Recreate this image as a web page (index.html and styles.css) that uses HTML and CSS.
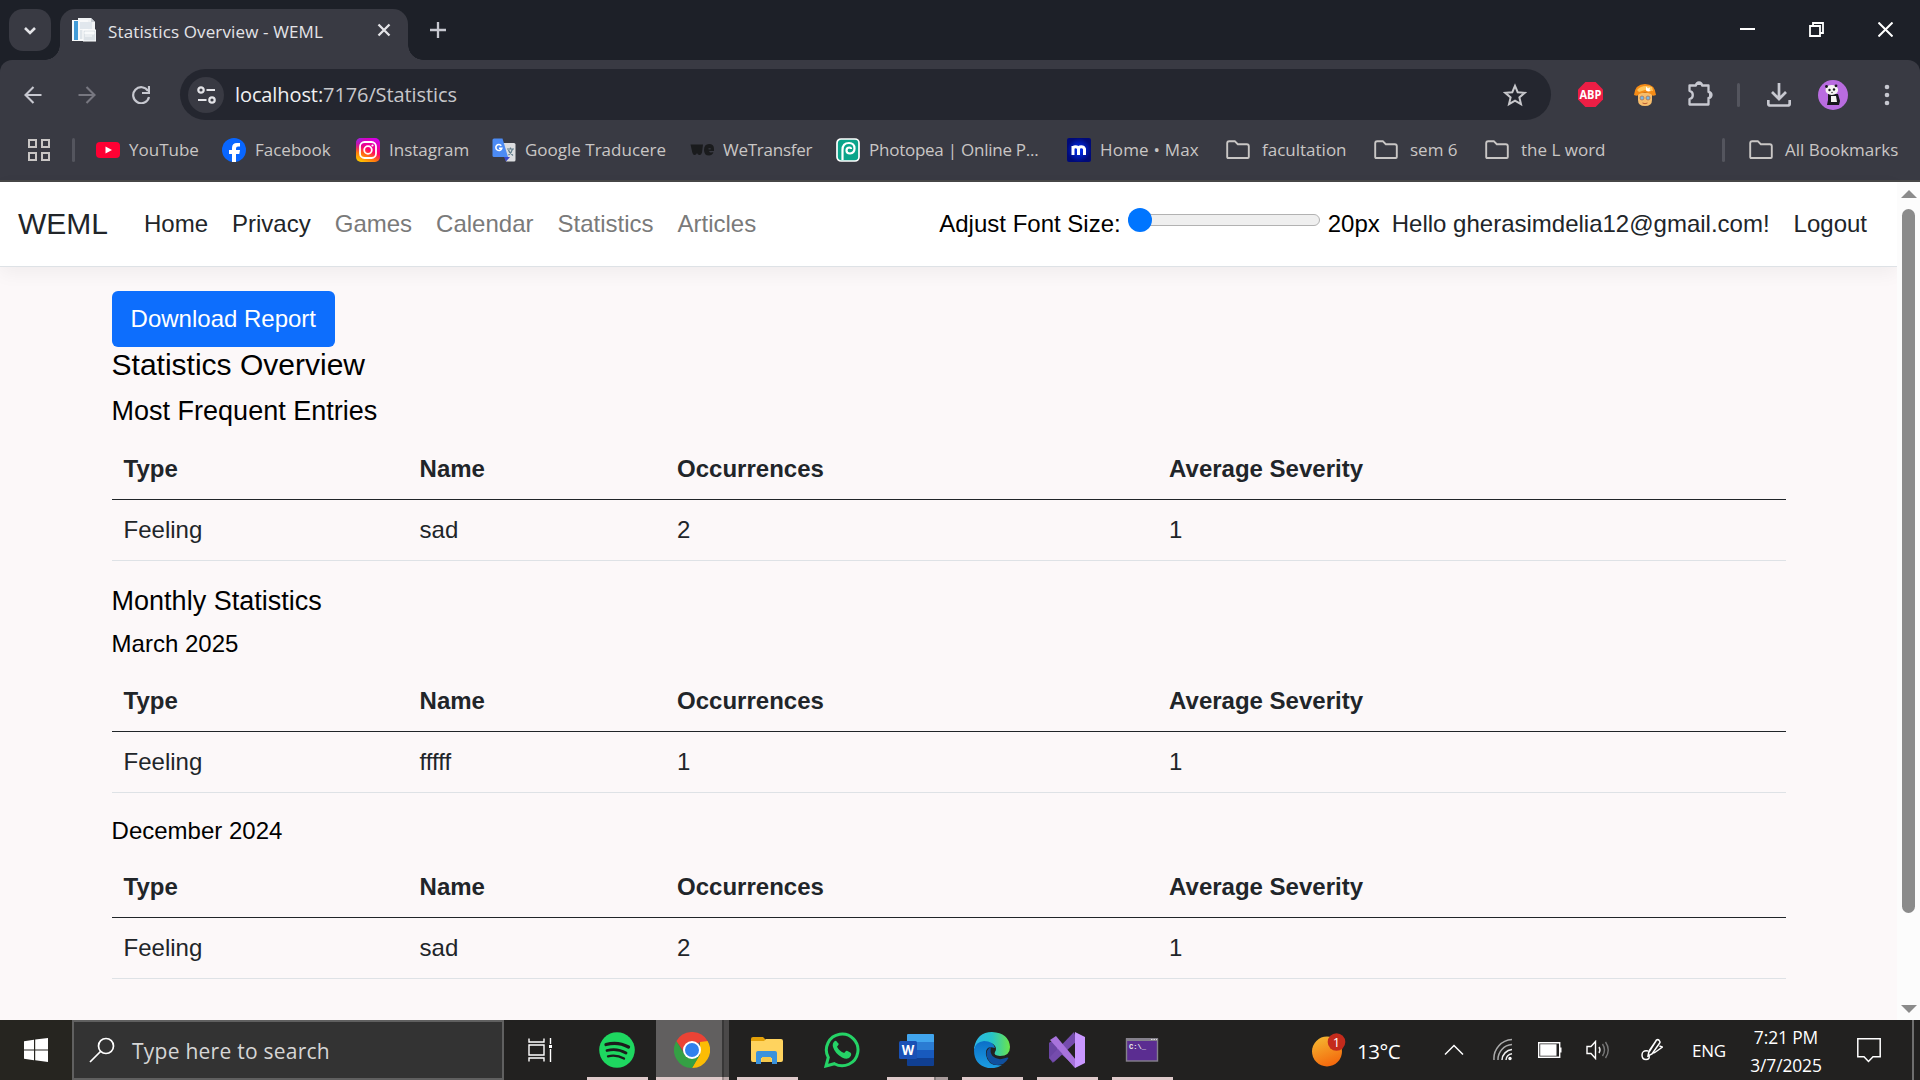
FILE: index.html
```html
<!DOCTYPE html>
<html lang="en">
<head>
<meta charset="utf-8">
<title>Statistics Overview - WEML</title>
<link rel="stylesheet" href="styles.css">
</head>
<body>
<svg class="defs" width="0" height="0" aria-hidden="true">
  <symbol id="folder" viewBox="0 0 24 24"><path d="M1.2 19V5.2q0-2 2-2h5.6l3 3h9q2 0 2 2V19q0 1-1 1H2.2q-1 0-1-1z" fill="none" stroke="#c9c6c5" stroke-width="1.9"/></symbol>
</svg>
<div class="screen">
  <header class="tabstrip">
    <button class="tab-search"><svg width="14" height="9" viewBox="0 0 14 9"><path d="M2 2l5 5 5-5" fill="none" stroke="#e4e4e8" stroke-width="2.6"/></svg></button>
    <div class="tab">
      <svg class="favicon" width="24" height="24" viewBox="0 0 24 24"><path d="M6 0h13l4 4v18H6z" fill="#f1f3f5"/><path d="M19 0v4h4z" fill="#c9ced4"/><path d="M0 2h16v21H0z" fill="#f8f9fa"/><path d="M2 3h4v19H2z" fill="#429bd7"/><path d="M8 4h12v7H8z" fill="#e1e7ed"/><path d="M8 12h4v9H8z" fill="#dfe5ea"/><path d="M11 12h13v11H11z" fill="#dce2e7" stroke="#fff"/><path d="M13 14h9v2h-9zM13 18h7" stroke="#f8fafb" fill="#f8fafb"/></svg>
      <span class="tab-title">Statistics Overview - WEML</span>
      <svg class="tab-close" width="14" height="14" viewBox="0 0 14 14"><path d="M1.5 1.5l11 11m0-11l-11 11" stroke="#e4e4e8" stroke-width="2.3"/></svg>
    </div>
    <svg class="tab-new" width="16" height="16" viewBox="0 0 16 16"><path d="M8 0v16M0 8h16" stroke="#c7c8d0" stroke-width="2.3"/></svg>
    <div class="window-controls">
      <svg width="15" height="15" viewBox="0 0 15 15"><path d="M0 7h15" stroke="#fff" stroke-width="2"/></svg>
      <svg width="15" height="15" viewBox="0 0 15 15" fill="none" stroke="#fff" stroke-width="1.8"><path d="M1 4h10v10H1zM4 3.5V1h10v10h-2.5"/></svg>
      <svg width="15" height="15" viewBox="0 0 15 15"><path d="M.5.5l14 14m0-14l-14 14" stroke="#fff" stroke-width="2"/></svg>
    </div>
  </header>

  <div class="chrome">
    <div class="toolbar">
      <div class="nav-buttons">
        <svg width="18" height="18" viewBox="0 0 18 18"><path d="M17.5 9H1.5M9.5 1L1.5 9l8 8" fill="none" stroke="#c7c8d0" stroke-width="2.1"/></svg>
        <svg width="18" height="18" viewBox="0 0 18 18"><path d="M.5 9h16M8.500 1l8 8-8 8" fill="none" stroke="#777780" stroke-width="2.1"/></svg>
        <svg width="18" height="18" viewBox="0 0 18 18"><path d="M16 5A8 8 0 1 0 17 11" fill="none" stroke="#c7c8d0" stroke-width="2.2"/><path d="M17 0v7h-7" fill="none" stroke="#c7c8d0" stroke-width="2.2"/></svg>
      </div>
      <div class="omnibox">
        <span class="site-chip"><svg width="19" height="18" viewBox="0 0 19 18" fill="none" stroke="#e4e4e8" stroke-width="2.2"><circle cx="4" cy="4" r="2.7"/><path d="M9.500 4H18M1 14h8.500"/><circle cx="15" cy="14" r="2.700"/></svg></span>
        <span class="url"><b>localhost:</b>7176/Statistics</span>
        <svg class="star" width="24" height="24" viewBox="0 0 24 24"><path d="M12 2.800l2.700 6.400 7 .6-5.300 4.600 1.600 6.800-6-3.600-6 3.600 1.600-6.800-5.300-4.600 7-.6z" fill="none" stroke="#c7c7cb" stroke-width="2"/></svg>
      </div>
      <svg class="ext-abp" width="25" height="25" viewBox="0 0 25 25"><path d="M7.400 0h10.200L25 7.400v10.200L17.600 25H7.400L0 17.600V7.400z" fill="#ed1e45"/><text x="12.500" y="17" text-anchor="middle" textLength="22" lengthAdjust="spacingAndGlyphs" class="abp-text">ABP</text></svg>
      <svg class="ext-face" width="22" height="24" viewBox="0 0 22 24"><path d="M4 10h14v7q0 6-7 6t-7-6z" fill="#f7bd6c"/><path d="M0 12Q1 1 11 1t11 11q-4 2-5-1-6-2.500-12 0-1 3-5 1z" fill="#f58b16"/><path d="M3 7q5-6 15-3l1 4-8-1-6 2z" fill="#ffc65c"/><path d="M12 3.500l2 2 2-1-.5 2.500 1.500 1-3 .5-2-1z" fill="#fff"/><g fill="#76b8e8" stroke="#a5745a" stroke-width=".8"><circle cx="8" cy="15" r="2"/><circle cx="14" cy="15" r="2"/></g><path d="M8.500 20q2.500 1.500 5 0" stroke="#b75a35" fill="none"/></svg>
      <svg class="ext-puzzle" width="26" height="26" viewBox="0 0 26 26"><path d="M2.500 4.500H9A3 3 0 0 1 15 4.500h6.500V11A3 3 0 0 1 21.500 17v6.500h-19V18A4.200 4.200 0 0 0 2.500 9.800z" fill="none" stroke="#c7c8d0" stroke-width="2.300" stroke-linejoin="round"/><path d="M9 4a3 3 0 0 1 6 0zM22 11a3 3 0 0 1 0 6z" fill="#c7c8d0"/></svg>
      <i class="divider tool-divider"></i>
      <svg class="downloads" width="24" height="24" viewBox="0 0 24 24"><path d="M12 0v15M5 9l7 7 7-7M1.300 17v3.500q0 2 2 2h17.400q2 0 2-2V17" fill="none" stroke="#c7c8d0" stroke-width="2.700"/></svg>
      <svg class="avatar" width="30" height="30" viewBox="0 0 30 30"><circle cx="15" cy="15" r="15" fill="#b96ce0"/><path d="M10 14h10l2 7-1 4H9l1-5z" fill="#17171b"/><path d="M13 16h5l1 6h-6z" fill="#f6f4f2"/><ellipse cx="13.800" cy="10" rx="6.300" ry="5" fill="#f6f4f2"/><g fill="#17171b"><circle cx="8.500" cy="6.500" r="1.400"/><circle cx="18" cy="5.800" r="1.400"/><circle cx="11.500" cy="10" r="1.200"/><circle cx="16" cy="9.500" r="1.200"/><circle cx="14" cy="12.500" r=".7"/></g></svg>
      <svg class="kebab" width="6" height="22" viewBox="0 0 6 22" fill="#c7c8d0"><circle cx="3" cy="3" r="2.300"/><circle cx="3" cy="11" r="2.300"/><circle cx="3" cy="19" r="2.300"/></svg>
    </div>

    <nav class="bookmarks">
      <svg class="apps" width="22" height="22" viewBox="0 0 22 22" fill="none" stroke="#c9c6c5" stroke-width="2"><path d="M1 1h7v7H1zM14 1h7v7h-7zM1 14h7v7H1zM14 14h7v7h-7z"/></svg>
      <i class="divider apps-divider"></i>
      <a class="bm w-yt"><svg width="24" height="24" viewBox="0 0 24 24"><rect y="4" width="24" height="16" rx="4" fill="#ff0033"/><path d="M9.500 8.500l6.500 3.500-6.500 3.500z" fill="#fff"/></svg><span>YouTube</span></a>
      <a class="bm w-fb"><svg width="24" height="24" viewBox="0 0 24 24"><circle cx="12" cy="12" r="12" fill="#0866ff"/><path d="M10 24v-8H7v-4h3v-2q0-5 5-5h3v3.500h-2q-2 0-2 2V12h4l-.7 4H14v8z" fill="#fff"/></svg><span>Facebook</span></a>
      <a class="bm w-ig"><svg width="24" height="24" viewBox="0 0 24 24"><defs><linearGradient id="ig" x1=".2" y1="1" x2=".7" y2="0"><stop offset="0" stop-color="#ffc800"/><stop offset=".3" stop-color="#ff7010"/><stop offset=".55" stop-color="#ff0069"/><stop offset="1" stop-color="#d300e5"/></linearGradient><radialGradient id="ig2" cx="0" cy="0" r=".6"><stop offset="0" stop-color="#7638fa"/><stop offset="1" stop-color="#d300c5" stop-opacity="0"/></radialGradient></defs><rect width="24" height="24" rx="5" fill="url(#ig)"/><rect width="24" height="24" rx="5" fill="url(#ig2)"/><g fill="none" stroke="#fff" stroke-width="1.800"><rect x="4" y="4" width="16" height="16" rx="4.500"/><circle cx="12" cy="12" r="3.800"/></g><circle cx="16.500" cy="7.500" r="1.100" fill="#fff"/></svg><span>Instagram</span></a>
      <a class="bm w-gt"><svg width="24" height="24" viewBox="0 0 24 24"><path d="M11 5h11q1.500 0 1.500 1.500V22q0 1.500-1.500 1.500h-8z" fill="#dcdde0"/><path d="M12 19h6l-4 4.500z" fill="#3a47c8"/><path d="M2 .5h8.500L16 19H2Q.5 19 .5 17.500V2Q.5.500 2 .5z" fill="#4c8bf5"/><path d="M9.300 7.700a3 3 0 1 0 .5 2.500H7" fill="none" stroke="#fff" stroke-width="1.600"/><path d="M15 11h7M18.500 9.500V11M20.500 11q-1 4-4 6M16.500 12q1 3 4.500 5.500" fill="none" stroke="#607d8b" stroke-width="1.200"/></svg><span>Google Traducere</span></a>
      <a class="bm w-wt"><svg width="24" height="24" viewBox="0 0 24 24"><path d="M.5 6.500h12.500l-1 8q-.8 3-3 2.500-1.500-.3-2-2-.5 1.700-2 2-2 .3-2.700-2.500z" fill="#1a1b1d"/><path d="M24 13h-5q.5 1.500 2 1.500 1.500-.3 2.500 0-1.500 3-4.500 3-5 0-5-5.500 0-6 5-6t5 5z" fill="#1a1b1d"/><path d="M18.500 10.800h2.200" stroke="#393a43" stroke-width="1.200"/></svg><span class="tight">WeTransfer</span></a>
      <a class="bm w-pp"><svg width="24" height="24" viewBox="0 0 24 24"><rect x="1" y="1" width="22" height="22" rx="4" fill="#0aa48b" stroke="#fff" stroke-width="1.700"/><path d="M6.500 22V12q0-7 6.500-7 5.500 0 5.500 5.500 0 4.500-4.500 5-3.500 0-3.500-3 0-3 3-3 1.500 0 1.500 1.500" fill="none" stroke="#fff" stroke-width="2.200"/></svg><span class="tight">Photopea | Online P...</span></a>
      <a class="bm w-mx"><svg width="24" height="24" viewBox="0 0 24 24"><defs><radialGradient id="mx"><stop offset="0" stop-color="#0030ff"/><stop offset="1" stop-color="#000a78"/></radialGradient></defs><rect width="24" height="24" rx="2" fill="url(#mx)"/><path d="M6 17V8M6 11q0-2.300 2.500-2.300T11.500 11v6m0-6q0-2.300 2.700-2.300T17.500 11v6" fill="none" stroke="#fff" stroke-width="3"/></svg><span class="loose">Home • Max</span></a>
      <a class="bm folder w-f1"><svg width="24" height="24"><use href="#folder"/></svg><span>facultation</span></a>
      <a class="bm folder w-f2"><svg width="24" height="24"><use href="#folder"/></svg><span>sem 6</span></a>
      <a class="bm folder"><svg width="24" height="24"><use href="#folder"/></svg><span>the L word</span></a>
      <div class="all-bookmarks">
        <i class="divider"></i>
        <a class="bm folder"><svg width="24" height="24"><use href="#folder"/></svg><span>All Bookmarks</span></a>
      </div>
    </nav>
  </div>

  <div class="viewport">
    <div class="page">
      <header class="navbar">
        <a class="brand">WEML</a>
        <a class="nav-link dark">Home</a>
        <a class="nav-link dark">Privacy</a>
        <a class="nav-link">Games</a>
        <a class="nav-link">Calendar</a>
        <a class="nav-link">Statistics</a>
        <a class="nav-link">Articles</a>
        <div class="nav-right">
          <label class="size-label">Adjust Font Size:</label>
          <div class="slider"><i class="thumb"></i></div>
          <span class="size-value">20px</span>
          <a class="nav-link dark hello">Hello gherasimdelia12@gmail.com!</a>
          <a class="nav-link dark">Logout</a>
        </div>
      </header>
      <main>
        <button class="btn">Download Report</button>
        <h1>Statistics Overview</h1>
        <h2>Most Frequent Entries</h2>
        <table>
          <thead><tr><th class="c-type">Type</th><th class="c-name">Name</th><th class="c-occ">Occurrences</th><th>Average Severity</th></tr></thead>
          <tbody><tr><td>Feeling</td><td>sad</td><td>2</td><td>1</td></tr></tbody>
        </table>
        <h2>Monthly Statistics</h2>
        <h3>March 2025</h3>
        <table>
          <thead><tr><th class="c-type">Type</th><th class="c-name">Name</th><th class="c-occ">Occurrences</th><th>Average Severity</th></tr></thead>
          <tbody><tr><td>Feeling</td><td>fffff</td><td>1</td><td>1</td></tr></tbody>
        </table>
        <h3>December 2024</h3>
        <table>
          <thead><tr><th class="c-type">Type</th><th class="c-name">Name</th><th class="c-occ">Occurrences</th><th>Average Severity</th></tr></thead>
          <tbody><tr><td>Feeling</td><td>sad</td><td>2</td><td>1</td></tr></tbody>
        </table>
      </main>
    </div>
    <div class="scrollbar">
      <svg width="16" height="8" viewBox="0 0 16 8"><path d="M0 8L8 0l8 8z" fill="#8b8b8b"/></svg>
      <i class="scroll-thumb"></i>
      <svg class="scroll-down" width="16" height="8" viewBox="0 0 16 8"><path d="M0 0l8 8 8-8z" fill="#8b8b8b"/></svg>
    </div>
  </div>

  <footer class="taskbar">
    <div class="start"><svg width="24" height="24" viewBox="0 0 24 24" fill="#fff"><path d="M0 3.300l10-1.500v9.700H0zM11.200 1.600L24 0v11.500H11.200zM0 12.600h10v9.700l-10-1.500zM11.200 12.600H24V24l-12.800-1.700z"/></svg></div>
    <div class="search"><svg width="26" height="26" viewBox="0 0 26 26" fill="none" stroke="#fff" stroke-width="1.700"><circle cx="17" cy="9" r="7.500"/><path d="M11.500 14.500L1 25"/></svg><span>Type here to search</span></div>
    <div class="taskview"><svg width="24" height="24" viewBox="0 0 24 24" fill="none" stroke="#fff" stroke-width="1.400"><path d="M1 .5v3.500h15V.5M1 7h15v10H1zM1 23.500V20h15v3.500M22.500 0v6M22.500 11v13"/><path d="M21 7h3v3h-3z" fill="#fff" stroke="none"/></svg></div>
    <div class="apps-row">
      <div class="app open"><svg width="36" height="36" viewBox="0 0 36 36"><circle cx="18" cy="18" r="17.800" fill="#1ed760"/><g fill="none" stroke="#1c1c1c" stroke-linecap="round"><path d="M7 12.500q12-3.300 22.500 2.500" stroke-width="3.300"/><path d="M8 18.500q10-2.700 19 2.500" stroke-width="2.800"/><path d="M9 24.300q8.500-2 16 2.300" stroke-width="2.300"/></g></svg></div>
      <div class="app open active"><svg width="36" height="36" viewBox="0 0 36 36"><path d="M2.400 9A18 18 0 0 1 33.600 9H18z" fill="#ea4335"/><path d="M33.600 9A18 18 0 0 1 18 36l8-13.500L26 9z" fill="#fbbc05"/><path d="M18 36A18 18 0 0 1 2.400 9l8 13.500L18 27l8-4.500z" fill="#34a044"/><path d="M2.400 9H34l-8 1-16 10z" fill="#ea4335"/><circle cx="18" cy="18" r="9" fill="#fff"/><circle cx="18" cy="18" r="7" fill="#2f80ed"/></svg><i class="split"></i></div>
      <div class="app open"><svg width="36" height="36" viewBox="0 0 36 36"><path d="M2 7q0-2 2-2h10l3 3v4H2z" fill="#e3a008"/><path d="M2 9h13l2-2h15q2 0 2 2v19q0 2-2 2H4q-2 0-2-2z" fill="#ffd35e"/><path d="M7 32V21q0-2 2-2h17q2 0 2 2v11h-5v-6H12v6z" fill="#3a92dc"/><path d="M13 25h9v5h-9z" fill="#f4c84b"/></svg></div>
      <div class="app"><svg width="36" height="36" viewBox="0 0 36 36"><path d="M2 34l2.300-8.500A15.800 15.800 0 1 1 10.400 31.700z" fill="none" stroke="#25d366" stroke-width="3"/><path d="M13 10q-1-2-2.500-.8Q8 11.500 9 15q2 6.500 9 10.500 6.500 3 8.800-1.500 1-2.500-.2-3.300l-3.600-1.900q-.8-.3-1.500.6l-1.300 1.700q-5-2-7.200-6.400l1.500-1.900q.3-.6 0-1.200z" fill="#25d366"/></svg></div>
      <div class="app open word"><svg width="36" height="36" viewBox="0 0 36 36"><path d="M9 2h25q1 0 1 1v7H8V3q0-1 1-1z" fill="#41a5ee"/><path d="M8 10h27v8H8z" fill="#2b7cd3"/><path d="M8 18h27v8H8z" fill="#185abd"/><path d="M8 26h27v7q0 1-1 1H9q-1 0-1-1z" fill="#103f91"/><rect y="9" width="18" height="18" rx="1.500" fill="#1951b5"/><text x="9" y="23" text-anchor="middle" textLength="12.500" lengthAdjust="spacingAndGlyphs" class="word-letter">W</text></svg></div>
      <div class="app open"><svg width="36" height="36" viewBox="0 0 36 36"><defs><linearGradient id="e1" x1="0" x2="1"><stop offset="0" stop-color="#2bb6e8"/><stop offset=".5" stop-color="#27c4c8"/><stop offset="1" stop-color="#6be54a"/></linearGradient><linearGradient id="e2" x1="0" y1="0" x2="0" y2="1"><stop offset="0" stop-color="#0c6fc8"/><stop offset="1" stop-color="#1b9de2"/></linearGradient></defs><path d="M0 16Q3 0 18 0q17 1 18 15 0 9-10 9-7-.5-5-4 2-3 0-6-3-4-9-3-8 1-11 7z" fill="url(#e1)"/><path d="M0 18Q1 10 10 9q9 0 11 7-10-3-9 7 2 12 16 10-6 4-14 3Q0 33 0 18z" fill="url(#e2)"/><path d="M17 15q-6 3-4 10 4 11 16 7 4-3 5.500-6-1-1-3 0-8 3-13-2-3-4-1.500-9z" fill="#10509e"/></svg></div>
      <div class="app open"><svg width="36" height="36" viewBox="0 0 36 36"><path d="M0 11l4-2 22 24 1 3-7-7z" fill="#8459bb"/><path d="M0 11l4-2 4 5v10l-4 7-4-5z" fill="#6b45a4"/><path d="M0 26L25 0l3 9L5 30z" fill="#754cad"/><path d="M1 8l6-4 20 24-1 8z" fill="#a873dc"/><path d="M26 0l10 5v26l-10 5z" fill="#c997ff"/></svg></div>
      <div class="app open"><svg width="36" height="36" viewBox="0 0 36 36"><rect x="2.500" y="7" width="31" height="22" fill="#5b2d91" stroke="#85818c" stroke-width="1.400"/><path d="M2 6h32v3H2z" fill="#85818c"/><path d="M27 7.500h6" stroke="#ddd" stroke-dasharray="1.500 1"/><text x="5" y="17" textLength="17" lengthAdjust="spacingAndGlyphs" class="cmd-text">C:\_</text></svg></div>
    </div>
    <div class="tray">
      <svg class="weather" width="34" height="34" viewBox="0 0 34 34"><defs><linearGradient id="sun" x1=".2" y1="0" x2=".6" y2="1"><stop offset="0" stop-color="#f5b731"/><stop offset="1" stop-color="#f4670c"/></linearGradient></defs><circle cx="15" cy="18.500" r="15" fill="url(#sun)"/><circle cx="24.500" cy="9" r="8.800" fill="#c42b1c"/><text x="24.500" y="14" text-anchor="middle" class="badge">1</text></svg>
      <span class="temp">13°C</span>
      <svg class="chev" width="20" height="12" viewBox="0 0 20 12"><path d="M1 10.500l9-9 9 9" fill="none" stroke="#fff" stroke-width="1.500"/></svg>
      <svg class="wifi" width="20" height="24" viewBox="0 0 20 24" fill="none" stroke-width="1.500"><g stroke="#aaa"><path d="M1 22A19 19 0 0 1 19 1.500M5 22A15 15 0 0 1 19 6.500"/></g><path d="M9 22A11 11 0 0 1 19 11.500M13 22A7 7 0 0 1 19 15.800" stroke="#eee"/><circle cx="17" cy="20.500" r="1.700" fill="#fff"/></svg>
      <svg class="battery" width="24" height="16" viewBox="0 0 24 16"><path d="M.7.700h21v14.600H.7z" fill="none" stroke="#fff" stroke-width="1.400"/><path d="M2.200 2.200h16.300v11.600H2.200zM22 5.500h1.500v5H22z" fill="#fff"/></svg>
      <svg class="speaker" width="24" height="20" viewBox="0 0 24 20" fill="none" stroke-width="1.400"><path d="M1 6.500h4l4.500-5v17L5 13.500H1z" stroke="#fff"/><path d="M13 7q2 3 0 6" stroke="#eee"/><path d="M16.500 4q4 6 0 12M19.500 2q5.500 8 0 16" stroke="#777"/></svg>
      <svg class="pen" width="22" height="24" viewBox="0 0 22 24" fill="none" stroke="#fff" stroke-width="1.500"><path d="M7 18l1-5L15.500 2q2-1 3 .8 1 1.500 0 2.500L11 16zM15.500 2L8 14M18.500 8l3 1-7 5q-2 1.500-2.500.5M7 13q-6-1-6 4 0 4.500 4 4.500t3-4"/></svg>
      <span class="lang">ENG</span>
      <div class="clock"><span class="time">7:21 PM</span><span class="date">3/7/2025</span></div>
      <svg class="notif" width="24" height="25" viewBox="0 0 24 25"><path d="M.8.800h22.400v18H16l-4.500 4.700L7 18.800H.8z" fill="none" stroke="#fff" stroke-width="1.500"/></svg>
      <i class="show-desktop"></i>
    </div>
  </footer>
</div>
</body>
</html>
```
FILE: styles.css
```css
* { box-sizing: border-box; }
body { margin: 0; overflow: hidden; font-family: "Liberation Sans", Arial, sans-serif; }
svg { display: block; flex: none; }
.defs { position: absolute; }
button { border: 0; font: inherit; }
.screen { width: 1920px; height: 1080px; display: flex; flex-direction: column; background: #1d2028; }

/* Browser tab strip */
.tabstrip { height: 60px; flex: none; display: flex; align-items: flex-start; padding: 9px 27px 0 9px; font-family: "Open Sans", "Noto Sans", sans-serif; }
.tab-search { width: 42px; height: 42px; border-radius: 14px; background: #393a43; display: flex; align-items: center; justify-content: center; padding: 0; }
.tab { position: relative; width: 348px; height: 51px; margin-left: 9px; border-radius: 15px 15px 0 0; background: #393a43; display: flex; align-items: flex-start; padding: 9px 17px 0 12px; }
.tab::before, .tab::after { content: ""; position: absolute; bottom: 0; width: 15px; height: 15px; }
.tab::before { left: -15px; background: radial-gradient(circle at 0 0, transparent 14.5px, #393a43 15px); }
.tab::after { right: -15px; background: radial-gradient(circle at 100% 0, transparent 14.5px, #393a43 15px); }
.tab-title { margin-left: 12px; color: #e4e4e8; font-size: 17px; letter-spacing: .13px; line-height: 24px; margin-top: 2px; white-space: nowrap; }
.tab-close { margin: 5px 0 0 auto; }
.tab-new { margin: 13px 0 0 22px; }
.window-controls { margin: 13px 0 0 auto; display: flex; gap: 54px; }

/* Toolbar and bookmarks */
.chrome { height: 122px; flex: none; background: #393a43; border-radius: 12px 12px 0 0; border-bottom: 2px solid #474747; font-family: "Open Sans", "Noto Sans", sans-serif; }
.toolbar { height: 69px; display: flex; align-items: center; }
.nav-buttons { width: 180px; display: flex; gap: 36px; padding-left: 24px; }
.omnibox { width: 1371px; height: 51px; border-radius: 26px; background: #24262f; display: flex; align-items: center; padding: 0 24px 0 8px; }
.site-chip { width: 36px; height: 36px; border-radius: 50%; background: #393a43; display: flex; align-items: center; justify-content: center; }
.url { margin-left: 11px; font-size: 20px; letter-spacing: -.1px; line-height: 30px; color: #c7c7cb; white-space: nowrap; }
.url b { font-weight: 400; color: #f0f0f2; }
.star { margin-left: auto; }
.ext-abp { margin-left: 27px; }
.abp-text { font: 700 12px "Open Sans", sans-serif; fill: #fff; }
.ext-face { margin-left: 31px; }
.ext-puzzle { margin-left: 31px; margin-top: -2px; }
.divider { width: 3px; height: 24px; border-radius: 2px; background: #54555e; flex: none; }
.tool-divider { margin-left: 24px; }
.downloads { margin-left: 27px; }
.avatar { margin-left: 27px; }
.kebab { margin-left: 36px; }
.bookmarks { height: 42px; display: flex; align-items: center; padding: 0 22px 0 28px; }
.apps-divider { margin: 0 21px 0 22px; }
.bm { display: flex; align-items: center; gap: 9px; color: #c9c6c5; font-size: 17px; line-height: 24px; white-space: nowrap; }
.tight { letter-spacing: -.25px; }
.loose { letter-spacing: .2px; }
.folder { gap: 12px; }
.w-yt { width: 126px; }
.w-fb { width: 134px; }
.w-ig { width: 136px; }
.w-gt { width: 198px; }
.w-wt { width: 146px; }
.w-pp { width: 231px; }
.w-mx { width: 159px; }
.w-f1 { width: 148px; }
.w-f2 { width: 111px; }
.all-bookmarks { margin-left: auto; width: 176px; display: flex; align-items: center; gap: 24px; }
.all-bookmarks .divider { margin-right: 0; }

/* Web page */
.viewport { height: 838px; flex: none; display: flex; background: #fcf8f9; }
.page { width: 1897px; font-size: 24px; line-height: 36px; color: #212529; }
.navbar { height: 85px; display: flex; align-items: center; padding: 0 18px; background: #fff; border-bottom: 1px solid #dee2e6; box-shadow: 0 6px 18px rgba(0, 0, 0, .05); white-space: nowrap; }
.brand { font-size: 30px; line-height: 45px; margin: -2px 24px 0 0; }
.nav-link { padding: 0 12px; color: #7a7a7a; }
.nav-link.dark { color: #212529; }
.nav-right { margin-left: auto; display: flex; align-items: center; color: #000; }
.slider { width: 192px; height: 12px; margin: -8px 8px 0 7px; border: 1px solid #b2b2b2; border-radius: 6px; background: #efefef; display: flex; align-items: center; }
.thumb { width: 24px; height: 24px; margin-left: -1px; border-radius: 50%; background: #0075ff; }
main { padding: 24px 111px 0 111.6px; }
.btn { display: block; height: 56px; padding: 0 19px; border-radius: 6px; background: #0d6efd; color: #fff; font-size: 24px; line-height: 56px; }
h1, h2, h3 { margin: 0 0 12px; font-weight: 400; line-height: 1.2; color: #000; }
h1 { font-size: 30px; }
h2 { font-size: 27px; }
h3 { font-size: 24px; }
table { width: 1674px; table-layout: fixed; border-collapse: separate; border-spacing: 0; margin-bottom: 24px; }
th, td { height: 61px; padding: 12px; text-align: left; border-bottom: 1px solid #dee2e6; }
th { border-bottom-color: #212529; }
.c-type { width: 296px; }
.c-name { width: 257.5px; }
.c-occ { width: 492px; }
.scrollbar { width: 23px; background: #fcfcfc; display: flex; flex-direction: column; align-items: center; padding: 8px 0 7px; }
.scroll-thumb { width: 13px; height: 704px; margin-top: 11px; border-radius: 7px; background: #8b8b8b; }
.scroll-down { margin-top: auto; }

/* Desktop taskbar */
.taskbar { height: 60px; flex: none; display: flex; background: #222120; color: #fff; font-family: "Open Sans", "Noto Sans", sans-serif; }
.start { width: 72px; display: flex; align-items: center; justify-content: center; background: #262520; }
.search { width: 432px; border: 2px solid #606060; background: #333; display: flex; align-items: center; padding-left: 15px; gap: 17px; color: #d6d6d6; font-size: 21px; letter-spacing: .25px; line-height: 30px; white-space: nowrap; }
.search span { padding-top: 2px; }
.taskview { width: 76px; padding-left: 24px; display: flex; align-items: center; }
.apps-row { display: flex; }
.app { position: relative; width: 75px; height: 60px; display: flex; align-items: center; justify-content: center; padding-right: 2px; }
.open::after { content: ""; position: absolute; left: 7px; right: 7px; bottom: 0; height: 3px; background: #dfcaca; }
.active { background: linear-gradient(90deg, transparent 1px, #615f5f 1px 67px, #383737 67px 69px, #4b4949 69px 74px, transparent 74px); }
.active::after { left: 1px; right: 1px; background: linear-gradient(90deg, #dfcaca 66px, #9b8b8b 66px 68px, #bba9a9 68px); }
.word::after { background: linear-gradient(90deg, #dfcaca 47px, #857b7b 47px 49px, #a89b9b 49px); }
.word-letter { font: 700 15px "Open Sans", sans-serif; fill: #fff; }
.cmd-text { font: 700 8px "Liberation Mono", monospace; fill: #eee; }
.tray { margin-left: auto; width: 608px; display: flex; align-items: center; }
.badge { font: 13px "Open Sans", sans-serif; fill: #fff; }
.temp { width: 44px; margin-left: 11px; padding-top: 1px; font-size: 20.5px; letter-spacing: -.5px; }
.chev { margin-left: 43px; }
.wifi { margin-left: 29px; }
.battery { margin-left: 25px; }
.speaker { margin-left: 24px; }
.pen { margin-left: 31px; }
.lang { width: 34px; margin-left: 29px; font-size: 17px; letter-spacing: -.3px; }
.clock { width: 90px; margin-left: 15px; padding-top: 1px; display: flex; flex-direction: column; align-items: center; font-size: 17.4px; letter-spacing: -.1px; line-height: 28px; white-space: nowrap; }
.notif { margin-left: 26px; }
.show-desktop { margin-left: 31px; width: 2px; height: 60px; background: #6e6e6e; }
```
